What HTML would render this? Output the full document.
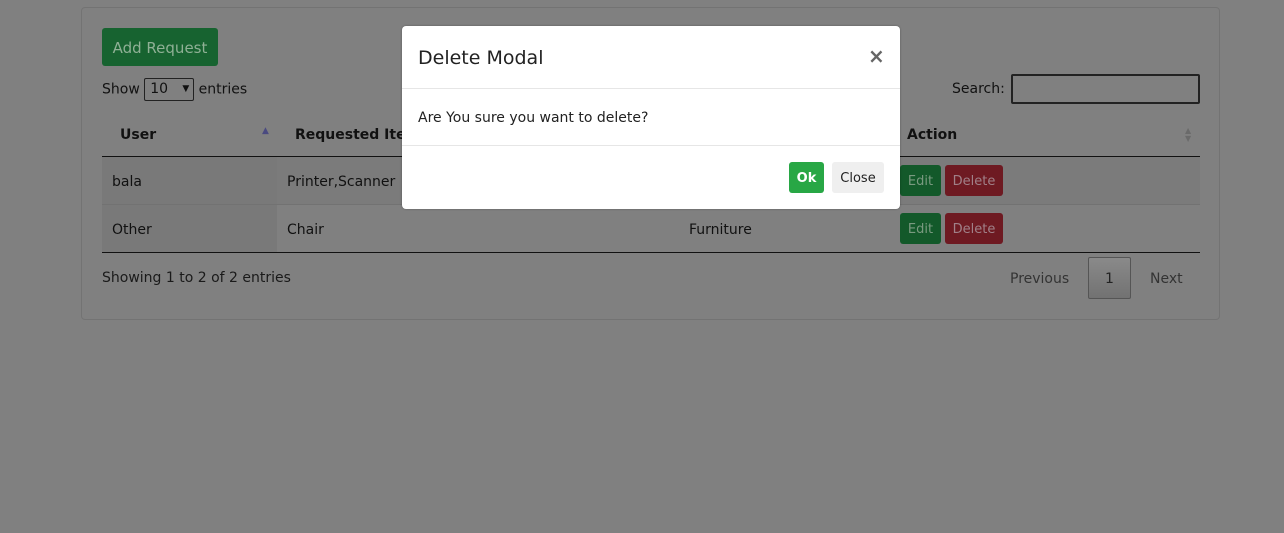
<!DOCTYPE html>
<html style="background:#808080"><head><style>
html,body{background-color:#808080}
body{margin:0;width:1284px;height:533px;font-family:"DejaVu Sans","Liberation Sans",sans-serif;font-size:14px;color:#111;position:relative;overflow:hidden}
.a{position:absolute}
.btn{position:absolute;border-radius:3px;text-align:center;color:#7a9a80}
</style></head><body>
<div class="a" style="left:0;top:0;width:1284px;height:533px;background:#808080"></div>
<div class="a" style="left:81px;top:7px;width:1137px;height:311px;border:1px solid #737373;border-radius:4px"></div>
<div class="btn" style="left:102px;top:28px;width:116px;height:38px;line-height:40px;background:#176330;font-size:15px;color:#8fb095">Add Request</div>
<div class="a" style="left:102px;top:78px;line-height:20px">Show <span style="display:inline-block;width:50px;height:23px;border:1px solid #222;border-radius:2px;vertical-align:middle;box-sizing:border-box;padding-left:5px;line-height:21px">10 <span style="float:right;margin-right:4px;font-size:9px">▼</span></span> entries</div>
<div class="a" style="left:952px;top:81px">Search:</div>
<div class="a" style="left:1011px;top:74px;width:189px;height:30px;border:2px solid #222;border-radius:2px;box-sizing:border-box"></div>
<div class="a" style="left:120px;top:127px;font-weight:bold">User</div>
<div class="a" style="left:262px;top:126px;font-size:9px;color:#4a4a80">▲</div>
<div class="a" style="left:295px;top:127px;font-weight:bold">Requested Item</div>
<div class="a" style="left:907px;top:127px;font-weight:bold">Action</div>
<div class="a" style="left:1185px;top:127px;font-size:8px;line-height:8px;color:#6a6a6a">▲<br>▼</div>
<div class="a" style="left:102px;top:156px;width:1098px;height:1px;background:#111"></div>
<div class="a" style="left:102px;top:157px;width:1098px;height:47px;background:#7b7b7b"></div>
<div class="a" style="left:102px;top:157px;width:175px;height:95px;background:#797979"></div>
<div class="a" style="left:102px;top:204px;width:1098px;height:1px;background:#727272"></div>
<div class="a" style="left:102px;top:252px;width:1098px;height:1px;background:#111"></div>
<div class="a" style="left:112px;top:174px">bala</div>
<div class="a" style="left:287px;top:174px">Printer,Scanner</div>
<div class="a" style="left:112px;top:222px">Other</div>
<div class="a" style="left:287px;top:222px">Chair</div>
<div class="a" style="left:689px;top:222px">Furniture</div>
<div class="btn" style="left:900px;top:165px;width:41px;height:31px;line-height:33px;background:#13592a;font-size:13px">Edit</div>
<div class="btn" style="left:945px;top:165px;width:58px;height:31px;line-height:33px;background:#6e1a22;font-size:13px;color:#a08088">Delete</div>
<div class="btn" style="left:900px;top:213px;width:41px;height:31px;line-height:33px;background:#13592a;font-size:13px">Edit</div>
<div class="btn" style="left:945px;top:213px;width:58px;height:31px;line-height:33px;background:#6e1a22;font-size:13px;color:#a08088">Delete</div>
<div class="a" style="left:102px;top:270px;color:#1a1a1a">Showing 1 to 2 of 2 entries</div>
<div class="a" style="left:1010px;top:271px;color:#333">Previous</div>
<div class="a" style="left:1088px;top:257px;width:41px;height:40px;border:1px solid #555;border-radius:2px;background:linear-gradient(#8a8a8a,#727272);text-align:center;line-height:42px;color:#222">1</div>
<div class="a" style="left:1150px;top:271px;color:#333">Next</div>
<div class="a" style="left:402px;top:26px;width:498px;height:183px;background:#fff;border-radius:4px;box-shadow:0 0 2px rgba(0,0,0,.3)">
 <div class="a" style="left:16px;top:21px;font-size:19px;color:#222">Delete Modal</div>
 <div class="a" style="left:466px;top:18px;font-size:20px;color:#666;font-weight:bold">×</div>
 <div class="a" style="left:0;top:62px;width:498px;height:1px;background:#e6e6e6"></div>
 <div class="a" style="left:16px;top:84px;color:#222">Are You sure you want to delete?</div>
 <div class="a" style="left:0;top:119px;width:498px;height:1px;background:#e6e6e6"></div>
 <div class="btn" style="left:387px;top:136px;width:35px;height:31px;line-height:33px;background:#28a745;color:#fff;font-weight:bold;font-size:13px">Ok</div>
 <div class="btn" style="left:430px;top:136px;width:52px;height:31px;line-height:33px;background:#efefef;color:#222;font-size:13px">Close</div>
</div>
</body></html>
